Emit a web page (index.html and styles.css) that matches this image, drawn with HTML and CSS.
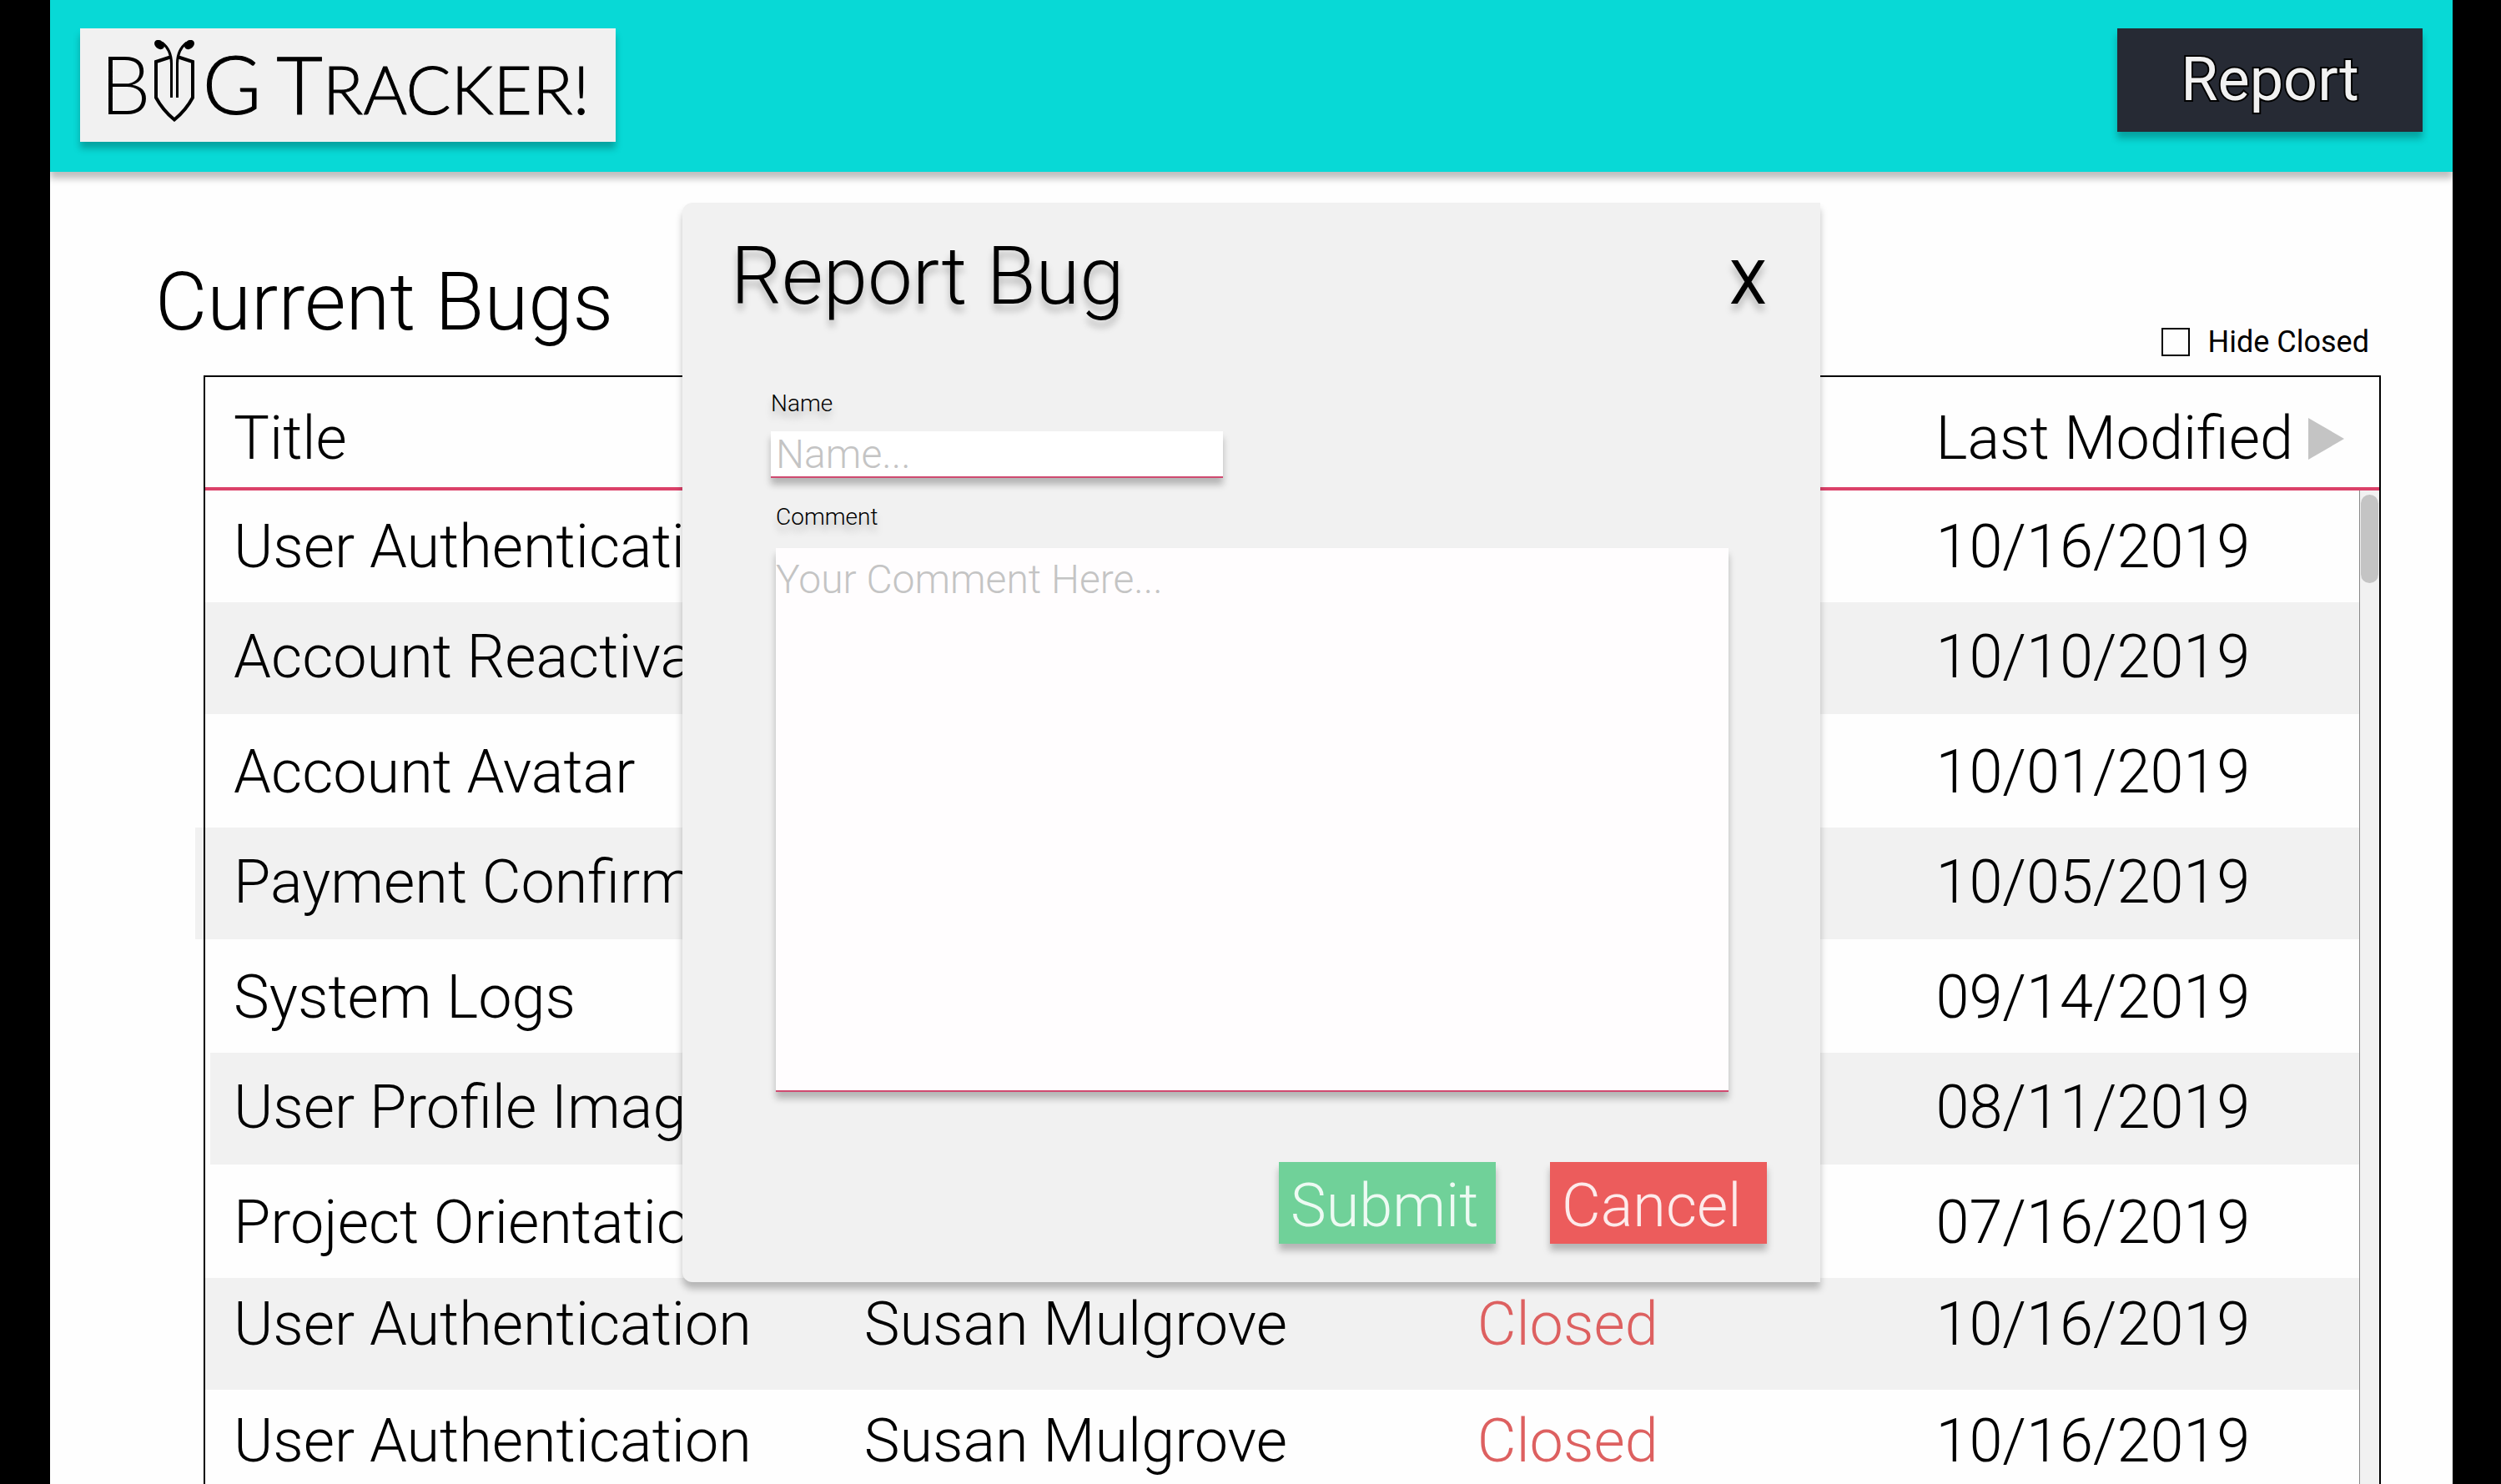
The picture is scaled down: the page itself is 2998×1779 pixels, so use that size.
FILE: index.html
```html
<!DOCTYPE html>
<html lang="en">
<head>
<meta charset="utf-8">
<title>Bug Tracker!</title>
<link rel="stylesheet" href="styles.css">
</head>
<body>
<div class="page">
  <header class="topbar">
    <h1 class="logo" aria-label="Bug Tracker!">
      <span class="logo-cap">B</span>
      <svg class="logo-bug" viewBox="0 0 48 98" aria-hidden="true">
        <g fill="none" stroke="#000" stroke-width="4">
          <path d="M19 20.500 2 26V69Q10 84 24 95.500Q38 84 46 69V26L29 20.500"/>
          <path d="M9 3C17 9 20.500 17 20.500 28V69" stroke-width="3"/>
          <path d="M39 3C31 9 27.500 17 27.500 28V69" stroke-width="3"/>
        </g>
        <ellipse cx="6" cy="5.500" rx="5" ry="6.500" transform="rotate(-50 6 5.500)"/>
        <ellipse cx="42" cy="5.500" rx="5" ry="6.500" transform="rotate(50 42 5.500)"/>
      </svg>
      <span class="logo-cap logo-bold">G</span>
      <span class="logo-word logo-bold"><span class="logo-cap">T</span>RACKER!</span>
    </h1>
    <button class="report-button" type="button">Report</button>
  </header>

  <main class="content">
    <div class="list-head">
      <h2 class="list-title">Current Bugs</h2>
      <label class="filter"><input class="filter-box" type="checkbox">Hide Closed</label>
    </div>
    <div class="frame">
      <table class="bugs">
        <colgroup><col class="col-title"><col class="col-name"><col class="col-status"><col></colgroup>
        <thead>
          <tr><th>Title</th><th></th><th></th>
          <th class="modified"><button class="sort" type="button">Last Modified<svg class="sort-icon" viewBox="0 0 43 50" aria-hidden="true"><path d="M0 0 43 25 0 50z" fill="#c4c4c4"/></svg></button></th></tr>
        </thead>
        <tbody>
          <tr><td>User Authentication</td><td></td><td></td><td>10/16/2019</td></tr>
          <tr><td>Account Reactivation</td><td></td><td></td><td>10/10/2019</td></tr>
          <tr><td>Account Avatar</td><td></td><td></td><td>10/01/2019</td></tr>
          <tr class="outdent"><td>Payment Confirmation</td><td></td><td></td><td>10/05/2019</td></tr>
          <tr><td>System Logs</td><td></td><td></td><td>09/14/2019</td></tr>
          <tr class="indent"><td>User Profile Images</td><td></td><td></td><td>08/11/2019</td></tr>
          <tr><td>Project Orientation</td><td></td><td></td><td>07/16/2019</td></tr>
          <tr class="raised"><td>User Authentication</td><td>Susan Mulgrove</td><td class="closed">Closed</td><td>10/16/2019</td></tr>
          <tr class="raised"><td>User Authentication</td><td>Susan Mulgrove</td><td class="closed">Closed</td><td>10/16/2019</td></tr>
        </tbody>
      </table>
      <div class="scrollbar"><div class="scrollbar-thumb"></div></div>
    </div>
  </main>

  <div class="overlay">
    <form class="dialog" role="dialog" aria-labelledby="dialog-title">
      <div class="dialog-head">
        <h2 class="dialog-title" id="dialog-title">Report Bug</h2>
        <button class="close" type="button" aria-label="Close">X</button>
      </div>
      <div class="field field-name">
        <label class="field-label" for="name">Name</label>
        <input class="field-input" id="name" type="text" placeholder="Name...">
      </div>
      <div class="field field-comment">
        <label class="field-label" for="comment">Comment</label>
        <textarea class="field-area" id="comment" placeholder="Your Comment Here..."></textarea>
      </div>
      <div class="actions">
        <button class="action submit" type="submit">Submit</button>
        <button class="action cancel" type="button">Cancel</button>
      </div>
    </form>
  </div>
</div>
</body>
</html>
```
FILE: styles.css
```css
* { box-sizing: border-box; }

body {
  margin: 0;
  height: 100vh;
  padding: 0 58px 0 60px;
  overflow: hidden;
  background: #000;
  color: #000;
  font-family: Roboto, "Liberation Sans", sans-serif;
  font-weight: 300;
}

h1, h2 { margin: 0; font-weight: 300; }

button, input, textarea { font: inherit; color: inherit; border: 0; border-radius: 0; }

.page {
  position: relative;
  display: flex;
  flex-direction: column;
  height: 100%;
  background: #fefefe;
}

/* Top bar */
.topbar {
  display: flex;
  justify-content: space-between;
  align-items: flex-start;
  height: 206px;
  padding: 34px 36px;
  background: #08d9d6;
  box-shadow: 0 8px 8px rgba(0, 0, 0, .25);
}

.logo {
  display: flex;
  align-items: flex-start;
  width: 642px;
  height: 136px;
  padding: 14px 24px 0;
  background: #f1f1f1;
  box-shadow: 0 8px 8px rgba(0, 0, 0, .25);
  font: 300 80px/104px Lato, sans-serif;
}

.logo-cap { font-size: 96px; }
.logo-bold { -webkit-text-stroke: 1px #000; }
.logo-bug { width: 48px; height: 98px; margin: 0 10px 0 4px; }
.logo-word { margin-left: 18px; }

.report-button {
  width: 366px;
  height: 124px;
  padding: 0;
  background: #262a34;
  color: #f1f1f1;
  box-shadow: 0 8px 8px rgba(0, 0, 0, .25);
  font-size: 72px;
  font-weight: 400;
  line-height: 84px;
  -webkit-text-stroke: 4px #000;
  paint-order: stroke fill;
}

/* Bug list */
.content {
  isolation: isolate;
  flex: 1;
  min-height: 0;
  display: flex;
  flex-direction: column;
  padding: 100px 86px 0 126px;
}

.list-head {
  display: flex;
  justify-content: space-between;
  align-items: flex-start;
  height: 144px;
}

.list-title { font-size: 96px; line-height: 112px; }

.filter {
  display: flex;
  align-items: center;
  gap: 22px;
  padding: 82px 14px 0 0;
  font-size: 36px;
  font-weight: 400;
  line-height: 44px;
}

.filter-box {
  appearance: none;
  width: 34px;
  height: 34px;
  margin: 0;
  border: 2px solid #000;
}

.frame {
  position: relative;
  flex: 1;
  min-height: 0;
  margin-left: 58px;
  border: 2px solid #000;
  border-bottom: 0;
}

.bugs {
  width: 100%;
  table-layout: fixed;
  border-spacing: 0;
  font-size: 72px;
  line-height: 84px;
}

.col-title { width: 29%; }
.col-name { width: 28.2%; }
.col-status { width: 21.1%; }

.bugs th {
  height: 136px;
  padding: 32px 0 0 34px;
  border-bottom: 4px solid #db4169;
  font-weight: 300;
  text-align: left;
  vertical-align: top;
}

.bugs td {
  height: 136px;
  padding: 28px 0 0 34px;
  vertical-align: top;
  white-space: nowrap;
}

.bugs tr:first-child td { height: 134px; padding-top: 26px; }
.bugs tr:nth-child(even) td { height: 134px; padding-top: 24px; background: #f1f1f1; }
.bugs tr.raised td { padding-top: 20px; }
.bugs tr.raised:nth-child(even) td { padding-top: 14px; }
.bugs td.closed { color: #dd6060; }

/* One stripe runs out past the frame, under its border */
.outdent td:first-child { position: relative; }
.outdent td:first-child::before {
  content: "";
  position: absolute;
  z-index: -1;
  inset: 0 100% 0 -12px;
  background: #f1f1f1;
}

.bugs .indent td:first-child { padding-left: 28px; border-left: 6px solid #fefefe; }

.sort {
  display: flex;
  align-items: center;
  gap: 18px;
  padding: 0;
  background: none;
  white-space: nowrap;
}

.sort-icon { width: 43px; height: 50px; }

.scrollbar {
  position: absolute;
  inset: 136px 0 0 auto;
  width: 24px;
  padding: 5px 1px;
  border-left: 1px solid #888;
  background: #f1f1f1;
}

.scrollbar-thumb { height: 106px; border-radius: 11px; background: #c4c4c4; }

/* Report dialog */
.overlay {
  position: absolute;
  inset: 243px 0 auto;
  display: flex;
  justify-content: center;
}

.dialog {
  width: 1364px;
  padding: 32px 64px 46px 58px;
  border-radius: 12px 0 0 12px;
  background: #f1f1f1;
  box-shadow: 0 8px 8px rgba(0, 0, 0, .25);
}

.dialog-head {
  display: flex;
  justify-content: space-between;
  align-items: baseline;
  text-shadow: 0 8px 8px rgba(0, 0, 0, .25);
}

.dialog-title { font-size: 96px; line-height: 112px; }

.close {
  padding: 0;
  background: none;
  font-size: 72px;
  font-weight: 400;
  line-height: 84px;
  text-shadow: inherit;
}

.field { display: flex; flex-direction: column; align-items: flex-start; }
.field-name { padding: 81px 0 0 48px; }
.field-comment { padding: 31px 46px 0 54px; }

.field-label {
  font-size: 28px;
  line-height: 32px;
  text-shadow: 0 8px 8px rgba(0, 0, 0, .25);
}

.field-input, .field-area {
  border-bottom: 2px solid #cf4a70;
  box-shadow: 0 8px 8px rgba(0, 0, 0, .25);
  font-size: 48px;
  line-height: 56px;
}

.field-input {
  width: 542px;
  height: 56px;
  margin-top: 17px;
  padding: 2px 6px 0;
  background: #fff;
}

.field-area {
  width: 100%;
  height: 652px;
  margin-top: 21px;
  padding: 10px 0;
  background: #fffdfe;
  resize: none;
}

.field-input::placeholder, .field-area::placeholder { color: #c4c4c4; opacity: 1; }

.actions {
  display: flex;
  justify-content: flex-end;
  gap: 65px;
  margin-top: 84px;
}

.action {
  width: 260px;
  height: 98px;
  padding: 8px 14px 0;
  box-shadow: 0 8px 8px rgba(0, 0, 0, .25);
  color: rgba(255, 255, 255, .88);
  font-size: 72px;
  line-height: 84px;
  text-align: left;
}

.submit { background: #70d199; }
.cancel { background: #ec5c5c; }
```
